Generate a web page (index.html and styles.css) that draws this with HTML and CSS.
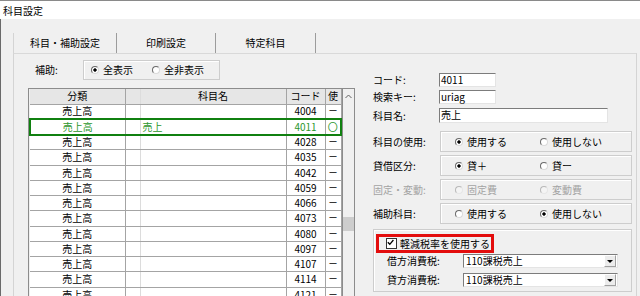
FILE: index.html
```html
<!DOCTYPE html>
<html lang="ja">
<head>
	<meta charset="utf-8">
	<title>科目設定</title>
	<link rel="stylesheet" href="styles.css">
</head>
<body>

<div class="titlebar">科目設定</div>
<div class="dialog">
	<div class="tabs">
		<div class="tab first">科目・補助設定</div>
		<div class="tab">印刷設定</div>
		<div class="tab">特定科目</div>
	</div>

	<div class="panel">
		<div class="leftcol">
			<div class="filter">
				<span class="lbl">補助:</span>
				<div class="group small">
					<span class="opt o1"><span class="radio on"></span>全表示</span>
					<span class="opt"><span class="radio"></span>全非表示</span>
				</div>
			</div>

			<div class="gridbox">
				<table class="grid">
					<colgroup>
						<col class="c1"><col class="c2"><col class="c3"><col class="c4"><col class="c5">
					</colgroup>
					<tr class="head"><th>分類</th><th class="thin"></th><th>科目名</th><th>コード</th><th>使</th></tr>
					<tr><td>売上高</td><td class="thin"></td><td></td><td>4004</td><td class="use">ー</td></tr>
					<tr class="sel"><td>売上高</td><td class="thin"></td><td class="name">売上</td><td>4011</td><td class="circle">〇</td></tr>
					<tr><td>売上高</td><td class="thin"></td><td></td><td>4028</td><td class="use">ー</td></tr>
					<tr><td>売上高</td><td class="thin"></td><td></td><td>4035</td><td class="use">ー</td></tr>
					<tr><td>売上高</td><td class="thin"></td><td></td><td>4042</td><td class="use">ー</td></tr>
					<tr><td>売上高</td><td class="thin"></td><td></td><td>4059</td><td class="use">ー</td></tr>
					<tr><td>売上高</td><td class="thin"></td><td></td><td>4066</td><td class="use">ー</td></tr>
					<tr><td>売上高</td><td class="thin"></td><td></td><td>4073</td><td class="use">ー</td></tr>
					<tr><td>売上高</td><td class="thin"></td><td></td><td>4080</td><td class="use">ー</td></tr>
					<tr><td>売上高</td><td class="thin"></td><td></td><td>4097</td><td class="use">ー</td></tr>
					<tr><td>売上高</td><td class="thin"></td><td></td><td>4107</td><td class="use">ー</td></tr>
					<tr><td>売上高</td><td class="thin"></td><td></td><td>4114</td><td class="use">ー</td></tr>
					<tr><td>売上高</td><td class="thin"></td><td></td><td>4121</td><td class="use">ー</td></tr>
				</table>
				<div class="vscroll">
					<div class="arrow">
						<svg width="7" height="5" viewBox="0 0 7 5"><path d="M0.5 4 L3.5 1 L6.5 4" fill="none" stroke="#606060" stroke-width="1"/></svg>
					</div>
					<div class="thumb"></div>
				</div>
			</div>
		</div>

		<div class="rightcol">
			<div class="field"><span class="flbl">コード:</span><span class="tb short">4011</span></div>
			<div class="field f2"><span class="flbl">検索キー:</span><span class="tb short">uriag</span></div>
			<div class="field f3"><span class="flbl">科目名:</span><span class="tb long">売上</span></div>

			<div class="grow g1">
				<span class="glbl">科目の使用:</span>
				<div class="group">
					<span class="opt wide"><span class="radio on"></span>使用する</span>
					<span class="opt"><span class="radio"></span>使用しない</span>
				</div>
			</div>
			<div class="grow">
				<span class="glbl">貸借区分:</span>
				<div class="group">
					<span class="opt wide"><span class="radio on"></span>貸＋</span>
					<span class="opt"><span class="radio"></span>貸ー</span>
				</div>
			</div>
			<div class="grow disabled">
				<span class="glbl">固定・変動:</span>
				<div class="group">
					<span class="opt wide"><span class="radio"></span>固定費</span>
					<span class="opt"><span class="radio"></span>変動費</span>
				</div>
			</div>
			<div class="grow">
				<span class="glbl">補助科目:</span>
				<div class="group">
					<span class="opt wide"><span class="radio"></span>使用する</span>
					<span class="opt"><span class="radio on"></span>使用しない</span>
				</div>
			</div>

			<div class="frame">
				<div class="mark">
					<span class="check">
						<svg width="9" height="9" viewBox="0 0 9 9"><path d="M1.8 4.2 L3.8 6.3 L7.4 2" fill="none" stroke="#000" stroke-width="1.3"/></svg>
					</span>
					<span class="marktext">軽減税率を使用する</span>
				</div>
				<div class="taxrow"><span class="tlbl">借方消費税:</span><span class="select">110課税売上<span class="dd"></span></span></div>
				<div class="taxrow t2"><span class="tlbl">貸方消費税:</span><span class="select">110課税売上<span class="dd"></span></span></div>
			</div>
		</div>
	</div>
</div>

</body>
</html>
```

FILE: styles.css
```css
body {
	margin: 0;
	width: 640px;
	height: 296px;
	overflow: hidden;
	background: #f0f0f0;
	color: #000;
	font-family: "Noto Sans CJK JP", "Liberation Sans", sans-serif;
	font-size: 10px;
	line-height: 12px;
}

.titlebar {
	height: 19px;
	line-height: 19px;
	padding-left: 3px;
	background: #fff;
	border-top: 1px solid #8a8a8a;
	box-sizing: border-box;
}

.dialog {
	border-left: 1px solid #6a6a6a;
	padding-top: 13px;
	height: 277px;
	box-sizing: border-box;
}

/* tabs */
.tabs {
	display: flex;
	margin-left: 12px;
	height: 21px;
}
.tab {
	margin-top: 1px;
	height: 20px;
	line-height: 20px;
	text-align: center;
	border-right: 1px solid #9c9c9c;
	box-sizing: border-box;
	width: 99px;
}
.tab.first {
	width: 104px;
	border-left: 1px solid #d4d4d4;
}
.tab:last-child {
	width: 100px;
}

.panel {
	display: flex;
	margin: 0 3px 0 12px;
	border-top: 1px solid #d9d9d9;
	border-left: 1px solid #d4d4d4;
	border-right: 1px solid #d4d4d4;
	height: 300px;
}

/* left column */
.leftcol {
	width: 327px;
	padding: 6px 0 0 14px;
	flex: none;
}
.filter {
	display: flex;
	align-items: center;
	height: 20px;
}
.filter .lbl {
	width: 55px;
	padding-left: 7px;
	box-sizing: border-box;
}

.group {
	display: flex;
	align-items: center;
	border: 1px solid #cdcdcd;
	box-shadow: inset 1px 1px 0 #fff;
	box-sizing: border-box;
	height: 21px;
	width: 192px;
	padding-left: 14px;
}
.group.small {
	width: 137px;
	height: 20px;
	padding-left: 7px;
}
.opt {
	display: flex;
	align-items: center;
	white-space: nowrap;
}
.opt.o1 {
	width: 61px;
}
.opt.wide {
	width: 85px;
}
.radio {
	width: 8px;
	height: 8px;
	border-radius: 50%;
	border: 1px solid;
	border-color: #6a6a6a #dadada #dadada #6a6a6a;
	background: #fff;
	margin-right: 4px;
	box-sizing: border-box;
}
.radio.on {
	background: radial-gradient(circle, #000 0 1.4px, #fff 1.9px);
}

.gridbox {
	display: flex;
	margin-top: 8px;
	border: 1px solid #8c8c8c;
	width: 327px;
	box-sizing: border-box;
}
.grid {
	border-collapse: collapse;
	table-layout: fixed;
	width: 311px;
}
.grid .c1 { width: 95px; }
.grid .c2 { width: 15px; }
.grid .c3 { width: 146px; }
.grid .c4 { width: 39px; }
.grid .c5 { width: 16px; }

.grid th, .grid td {
	height: 15.25px;
	padding: 0;
	border: 1px solid #a4a4a4;
	text-align: center;
	font-weight: normal;
	white-space: nowrap;
	overflow: hidden;
	box-sizing: border-box;
}
.grid tr:first-child th {
	border-top: none;
	height: 15px;
}
.grid th:first-child, .grid td:first-child {
	border-left: none;
}
.grid .head th {
	background: #e6e6e6;
}
.grid td {
	background: #fff;
}
.grid .thin {
	border-right-color: #dcdcdc;
}
.grid td.name {
	text-align: left;
	padding-left: 2px;
}
.grid td.use {
	font-size: 9px;
}
.grid td.circle {
	font-size: 10px;
	line-height: 10px;
}

.grid tr.sel td {
	color: #2c962c;
	border-top: 2px solid #108010;
	border-bottom: 2px solid #108010;
}
.grid tr.sel td:first-child {
	border-left: 2px solid #108010;
}
.grid tr.sel td:last-child {
	border-right: 2px solid #108010;
}

.vscroll {
	width: 14px;
	border-left: 1px solid #8c8c8c;
	background: #f0f0f0;
	display: flex;
	flex-direction: column;
	align-items: center;
}
.vscroll .arrow {
	height: 15px;
	display: flex;
	align-items: center;
}
.vscroll .thumb {
	margin-top: 113px;
	width: 11px;
	height: 14px;
	background: #cdcdcd;
}

/* right column */
.rightcol {
	width: 259px;
	margin-left: 18px;
	padding-top: 19px;
	flex: none;
}
.field {
	display: flex;
	align-items: center;
	height: 14px;
}
.field.f2 {
	margin-top: 3px;
}
.field.f3 {
	margin-top: 4px;
	height: 15px;
}
.flbl {
	width: 66px;
}
.tb {
	height: 100%;
	background: #fff;
	border: 1px solid;
	border-color: #7c7c7c #e4e4e4 #e4e4e4 #7c7c7c;
	box-sizing: border-box;
	padding-left: 1px;
	line-height: 12px;
}
.tb.short {
	width: 57px;
}
.tb.long {
	width: 169px;
}

.grow {
	display: flex;
	align-items: center;
	margin-top: 3px;
}
.grow.g1 {
	margin-top: 8px;
}
.glbl {
	width: 67px;
}
.grow.disabled {
	color: #a3a3a3;
}
.grow.disabled .radio {
	border-color: #b8b8b8 #e6e6e6 #e6e6e6 #b8b8b8;
	background: #f4f4f4;
}

.frame {
	margin-top: 5px;
	width: 259px;
	height: 63px;
	border: 1px solid #cdcdcd;
	box-shadow: inset 1px 1px 0 #fff;
	box-sizing: border-box;
	padding: 4px 0 0 2px;
}
.mark {
	display: flex;
	align-items: center;
	width: 118px;
	height: 19px;
	border: 3px solid #e30d0d;
	box-sizing: border-box;
	padding-left: 7px;
	white-space: nowrap;
}
.check {
	display: flex;
	flex: none;
	width: 9px;
	height: 9px;
	border: 1px solid #333;
	background: #fff;
	margin-right: 3px;
}
.check svg {
	margin: -1px 0 0 -1px;
}

.taxrow {
	display: flex;
	align-items: center;
	height: 14px;
	margin-top: 1px;
	padding-left: 11px;
}
.taxrow.t2 {
	margin-top: 5px;
}
.tlbl {
	width: 76px;
}
.select {
	display: flex;
	align-items: center;
	width: 155px;
	height: 14px;
	background: #fff;
	border: 1px solid;
	border-color: #7c7c7c #e4e4e4 #e4e4e4 #7c7c7c;
	box-sizing: border-box;
	padding-left: 2px;
}
.dd {
	margin-left: auto;
	width: 10px;
	height: 10px;
	margin-right: 1px;
	background: #ececec;
	border: 1px solid;
	border-color: #fff #a0a0a0 #a0a0a0 #fff;
	display: flex;
	align-items: center;
	justify-content: center;
}
.dd::before {
	content: "";
	border-left: 3px solid transparent;
	border-right: 3px solid transparent;
	border-top: 3px solid #000;
}
```
